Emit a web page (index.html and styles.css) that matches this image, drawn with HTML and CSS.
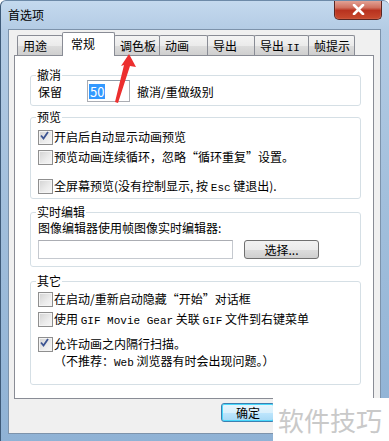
FILE: index.html
```html
<!DOCTYPE html>
<html lang="zh-CN">
<head>
  <meta charset="UTF-8">
  <title>首选项</title>
  <link rel="stylesheet" href="styles.css">
</head>
<body>
  <div class="window">
    <div class="titlebar">
      <span class="title">首选项</span>
      <div class="close">
        <svg width="13" height="11" viewBox="0 0 13 11"><path d="M2 1 L11 10 M11 1 L2 10" stroke="#fff" stroke-width="2.6" stroke-linecap="round"/></svg>
      </div>
    </div>
    <div class="client">
      <div class="tabs">
        <div class="tab w46">用途</div>
        <div class="tab active w53">常规</div>
        <div class="tab w46">调色板</div>
        <div class="tab w49">动画</div>
        <div class="tab w48">导出</div>
        <div class="tab w55">导出 <span class="mono">II</span></div>
        <div class="tab w47">帧提示</div>
      </div>
      <div class="panel">
        <fieldset class="group g-undo">
          <legend>撤消</legend>
          <div class="undo-row">
            <span class="undo-label">保留</span>
            <span class="num"><span class="sel">50</span></span>
            <span class="undo-text">撤消/重做级别</span>
          </div>
        </fieldset>

        <fieldset class="group g-preview">
          <legend>预览</legend>
          <div class="check on">开启后自动显示动画预览</div>
          <div class="check">预览动画连续循环，忽略“循环重复”设置。</div>
          <div class="check gap">全屏幕预览(没有控制显示, 按 <span class="mono">Esc</span> 键退出).</div>
        </fieldset>

        <fieldset class="group g-edit">
          <legend>实时编辑</legend>
          <div class="line">图像编辑器使用帧图像实时编辑器:</div>
          <div class="edit-row">
            <span class="path"></span>
            <span class="btn">选择...</span>
          </div>
        </fieldset>

        <fieldset class="group g-other">
          <legend>其它</legend>
          <div class="check">在启动/重新启动隐藏“开始”对话框</div>
          <div class="check">使用 <span class="mono">GIF Movie Gear</span> 关联 <span class="mono">GIF</span> 文件到右键菜单</div>
          <div class="check on multi">
            <div>允许动画之内隔行扫描。</div>
            <div>（不推荐：<span class="mono">Web</span> 浏览器有时会出现问题。）</div>
          </div>
        </fieldset>
      </div>
      <div class="footer">
        <span class="ok">确定</span>
      </div>
    </div>
    <div class="watermark">软件技巧</div>
    <svg class="arrow" width="389" height="441" viewBox="0 0 389 441">
      <polygon points="129,54 136,67 130,66 118,103 115,102 124,65 121,66" fill="#ec2f2f"/>
    </svg>
  </div>
</body>
</html>
```

FILE: styles.css
```css
* {
  margin: 0;
  padding: 0;
  box-sizing: border-box;
}
body {
  font-family: "Noto Sans CJK SC", "Liberation Sans", sans-serif;
  font-size: 12px;
  color: #000;
  background: #fff;
}
.mono {
  font-family: "Liberation Mono", "DejaVu Sans Mono", monospace;
  font-size: 11px;
}
.window {
  position: relative;
  width: 389px;
  height: 441px;
  display: flex;
  flex-direction: column;
  background: linear-gradient(180deg, #c4d9ee 0, #b3cbe4 30px, #a2bfdc 200px, #8fb2d5 441px);
  border-left: 1px solid #3e5a78;
  border-top: 1px solid #6d8aa8;
  border-radius: 6px 6px 0 0;
  overflow: hidden;
}
.titlebar {
  height: 28px;
  display: flex;
  justify-content: space-between;
  align-items: flex-start;
  padding-left: 7px;
}
.title {
  line-height: 27px;
}
.close {
  width: 48px;
  height: 20px;
  margin-right: 7px;
  margin-top: -1px;
  display: flex;
  align-items: center;
  justify-content: center;
  border: 1px solid #5a2622;
  border-top: 0;
  border-radius: 0 0 5px 5px;
  background: linear-gradient(180deg, #e5a99d 0, #d0705f 40%, #b8321f 55%, #c84a2e 100%);
  box-shadow: inset 0 0 1px #f4c8bd;
}
.client {
  flex: 1;
  margin: 0 8px 7px 7px;
  background: #f0f0f0;
  border: 1px solid #7d93ab;
  display: flex;
  flex-direction: column;
}
.tabs {
  height: 25px;
  display: flex;
  align-items: flex-end;
  padding-left: 8px;
}
.tab {
  height: 20px;
  line-height: 19px;
  padding-left: 5px;
  margin-left: -1px;
  border: 1px solid #898c95;
  border-bottom: 0;
  border-radius: 2px 2px 0 0;
  background: linear-gradient(180deg, #f4f4f4 0, #ebebeb 50%, #dddddd 51%, #cfcfcf 100%);
  white-space: nowrap;
}
.tab:first-child {
  margin-left: 0;
}
.tab.active {
  position: relative;
  z-index: 1;
  height: 24px;
  line-height: 21px;
  margin-bottom: -1px;
  padding-left: 8px;
  background: #fff;
}
.w46 { width: 46px; }
.w47 { width: 47px; }
.w48 { width: 48px; }
.w49 { width: 49px; }
.w53 { width: 53px; }
.w55 { width: 55px; }
.panel {
  height: 344px;
  margin: 0 6px 0 5px;
  padding: 0 12px 0 15px;
  background: #fff;
  border: 1px solid #898c95;
}
.group {
  border: 1px solid #d5dfe5;
  border-radius: 3px;
  padding: 0 0 0 7px;
  min-width: 0;
}
.group legend {
  height: 12px;
  line-height: 12px;
  padding: 0 1px;
  margin-left: -2px;
}
.g-undo {
  margin-top: 13px;
  padding-bottom: 3px;
}
.g-preview {
  margin-top: 5px;
  padding-top: 4px;
  padding-bottom: 2px;
}
.g-edit {
  margin-top: 7px;
  padding-bottom: 7px;
}
.g-other {
  margin-top: 8px;
  padding-top: 2px;
  padding-bottom: 12px;
}
.undo-row {
  height: 22px;
  margin-top: -1px;
  display: flex;
  align-items: center;
}
.undo-label {
  width: 49px;
}
.num {
  width: 43px;
  height: 22px;
  border: 1px solid #abadb3;
  border-top-color: #8e9ba8;
  display: flex;
  align-items: center;
  padding-left: 1px;
}
.sel {
  background: #3399ff;
  color: #fff;
  line-height: 15px;
  padding: 0 1px;
  font-size: 13px;
}
.undo-text {
  margin-left: 7px;
}
.check {
  position: relative;
  height: 20px;
  line-height: 20px;
  padding-left: 16px;
  white-space: nowrap;
}
.check::before {
  content: "";
  position: absolute;
  left: 0;
  top: 3px;
  width: 13px;
  height: 13px;
  border: 1px solid #8f8f8f;
  background: linear-gradient(135deg, #d2d2d2 0, #ececec 60%, #f7f7f7 100%);
  box-shadow: inset 0 0 0 1px #f4f4f4;
}
.check.on::after {
  content: "";
  position: absolute;
  left: 2px;
  top: 4px;
  width: 9px;
  height: 9px;
  background: url("data:image/svg+xml,%3Csvg xmlns='http://www.w3.org/2000/svg' width='9' height='9'%3E%3Cpath d='M1 4.5 L3.5 7.5 L8 1' fill='none' stroke='%233c5492' stroke-width='1.8'/%3E%3C/svg%3E") no-repeat;
}
.check.gap {
  margin-top: 9px;
}
.check.multi {
  height: auto;
  line-height: 17px;
  margin-top: 6px;
}
.check.multi::before {
  top: 2px;
}
.check.multi::after {
  top: 3px;
}
.line {
  line-height: 20px;
}
.edit-row {
  margin-top: 2px;
  display: flex;
}
.path {
  width: 195px;
  height: 19px;
  border: 1px solid #c5c9cf;
  border-top-color: #abadb3;
}
.btn {
  width: 75px;
  height: 19px;
  margin-left: 11px;
  line-height: 17px;
  text-align: center;
  border: 1px solid #707070;
  border-radius: 3px;
  background: linear-gradient(180deg, #f2f2f2 0, #ebebeb 50%, #dddddd 51%, #cfcfcf 100%);
}
.footer {
  display: flex;
  justify-content: flex-end;
  padding: 4px 105px 0 0;
}
.ok {
  width: 54px;
  height: 19px;
  line-height: 17px;
  padding-left: 14px;
  border: 1px solid #3c7fb1;
  border-radius: 3px;
  background: linear-gradient(180deg, #e8f5fc 0, #d9f0fc 50%, #bee6fd 51%, #a7d9f5 100%);
  box-shadow: inset 0 0 0 1px #48d8fb;
}
.watermark {
  position: absolute;
  left: 272px;
  top: 397px;
  right: 0;
  bottom: 0;
  background: #fff;
  color: #c9c9c9;
  font-size: 26px;
  line-height: 44px;
  padding-left: 5px;
  white-space: nowrap;
}
.arrow {
  position: absolute;
  left: -1px;
  top: -1px;
  pointer-events: none;
}
```
